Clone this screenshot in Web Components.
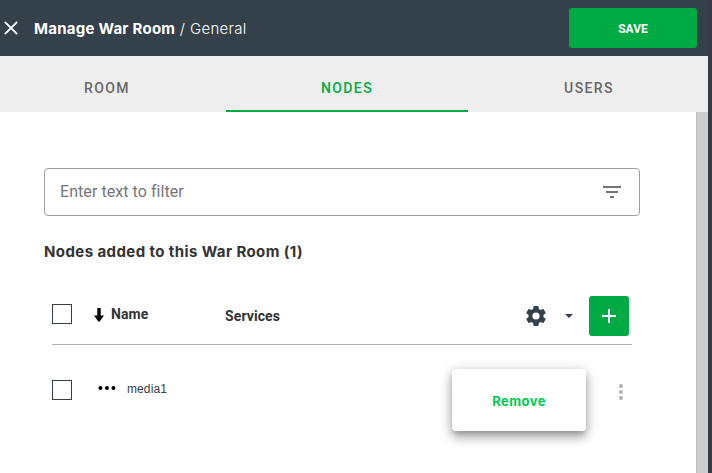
<!DOCTYPE html>
<html lang="en">
<head>
<meta charset="utf-8">
<title>Manage War Room</title>
<style>
  html, body { margin: 0; height: 100%; overflow: hidden; background: #383c4a; }
  body { font-family: Roboto, "Liberation Sans", sans-serif; }
</style>
</head>
<body>
<war-room-dialog></war-room-dialog>
<script>
const define = (name, html) => {
  const template = document.createElement('template');
  template.innerHTML = html;
  customElements.define(name, class extends HTMLElement {
    constructor() {
      super();
      this.attachShadow({ mode: 'open' }).append(template.content.cloneNode(true));
    }
  });
};

define('dialog-header', `
<style>
  :host { display: flex; align-items: center; box-sizing: border-box; height: 56px; padding: 0 11px 0 4px; background: #35414a; color: #fff; }
  svg { display: block; width: 14px; height: 14px; margin-right: 16px; }
  .title { flex: 1; font: 400 15px/24px Inter, sans-serif; white-space: pre; margin-top: 1px; }
  b { font-weight: 700; letter-spacing: .25px; }
  .sub { font-weight: 300; letter-spacing: .32px; }
</style>
<svg viewBox="0 0 14 14"><path d="M.8.8 13.2 13.2M13.2.8.8 13.2" stroke="#fff" stroke-width="1.9" fill="none"/></svg>
<div class="title"><b><slot name="title"></slot></b><span class="sub"> / <slot name="section"></slot></span></div>
<slot name="action"></slot>`);

define('primary-button', `
<style>
  :host { display: flex; align-items: center; justify-content: center; box-sizing: border-box; width: 128px; height: 40px; padding-top: 1px; border-radius: 3px; background: #00ab44; color: #fff; font: 700 12px/16px Roboto, sans-serif; }
</style><slot></slot>`);

define('tab-item', `
<style>
  :host { display: flex; justify-content: center; box-sizing: border-box; width: 242px; flex: none; height: 56px; padding-top: 20px; color: #686868; font: 500 14px/24px Roboto, sans-serif; letter-spacing: 1.4px; border-bottom: 2px solid transparent; }
  :host(:first-child) { width: 238px; }
  :host([selected]) { color: #00ab44; border-color: #00ab44; }
</style><slot></slot>`);

define('tab-bar', `
<style>
  :host { display: flex; margin-left: -12px; background: #eee; }
</style><slot></slot>`);

define('filter-input', `
<style>
  :host { display: flex; align-items: center; justify-content: space-between; box-sizing: border-box; height: 48px; padding: 0 18px 1px 15px; border: 1px solid #9e9e9e; border-radius: 4px; color: #757575; font: 400 16px/24px Roboto, sans-serif; letter-spacing: .06px; }
  svg { display: block; width: 18px; height: 12px; margin-top: 1px; }
</style>
<span><slot></slot></span>
<svg viewBox="0 0 18 12" fill="#757575"><path d="M0 0h18v2H0zM3 5h12v2H3zM7 10h4v2H7z"/></svg>`);

define('check-box', `
<style>:host { display: block; box-sizing: border-box; flex: none; width: 20px; height: 20px; border: 1px solid #35414a; }</style>`);

define('table-head', `
<style>
  :host { display: flex; box-sizing: border-box; height: 49px; border-bottom: 1px solid #aeb3b7; color: #333; font: 700 14px/20px Roboto, sans-serif; letter-spacing: .1px; }
  check-box { margin: 8px 22px 0 0; }
  .arrow { width: 10px; height: 14px; margin: 12px 7px 0 0; }
  .name { width: 114px; margin-top: 8px; }
  .services { flex: 1; margin-top: 10px; }
  .gear { width: 24px; height: 24px; margin: 8px 17px 0 0; }
  .caret { width: 8px; height: 4px; margin: 18px 16px 0 0; }
  .add { display: grid; place-items: center; width: 40px; height: 40px; margin-right: 3px; border-radius: 3px; background: #00ab44; }
  .add svg { width: 14px; height: 14px; }
</style>
<check-box></check-box>
<svg class="arrow" viewBox="0 0 10 14"><path d="M3.3 0h3.4v7.5H10L5.7 13.6H4.3L0 7.5h3.3z"/></svg>
<div class="name"><slot name="name"></slot></div>
<div class="services"><slot name="services"></slot></div>
<svg class="gear" viewBox="0 0 24 24" fill="#35414a"><path d="M19.43 12.98c.04-.32.07-.64.07-.98s-.03-.66-.07-.98l2.11-1.65c.19-.15.24-.42.12-.64l-2-3.46c-.12-.22-.39-.3-.61-.22l-2.49 1c-.52-.4-1.08-.73-1.69-.98l-.38-2.65A.49.49 0 0 0 14 2h-4c-.25 0-.46.18-.49.42l-.38 2.65c-.61.25-1.17.59-1.69.98l-2.49-1c-.23-.09-.49 0-.61.22l-2 3.46c-.13.22-.07.49.12.64l2.11 1.65c-.04.32-.07.65-.07.98s.03.66.07.98l-2.11 1.65c-.19.15-.24.42-.12.64l2 3.46c.12.22.39.3.61.22l2.49-1c.52.4 1.08.73 1.69.98l.38 2.65c.03.24.24.42.49.42h4c.25 0 .46-.18.49-.42l.38-2.65c.61-.25 1.17-.59 1.69-.98l2.49 1c.23.09.49 0 .61-.22l2-3.46c.12-.22.07-.49-.12-.64zM12 15.6a3.6 3.6 0 1 1 0-7.2 3.6 3.6 0 0 1 0 7.2z"/></svg>
<svg class="caret" viewBox="0 0 8 4" fill="#35414a"><path d="M0 0h8L4 4z"/></svg>
<div class="add"><svg viewBox="0 0 14 14" fill="#fff"><path d="M6 0h2v6h6v2H8v6H6V8H0V6h6z"/></svg></div>`);

define('node-row', `
<style>
  :host { display: flex; position: relative; padding-top: 35px; color: #35414a; }
  .dots { width: 18px; height: 4px; margin: 6px 11px 0 26px; }
  .name { flex: 1; font: 400 12px/16px "Liberation Sans", sans-serif; margin-top: 1px; letter-spacing: .1px; }
  .more { width: 4px; height: 16px; margin: 4px 9px 0 0; }
</style>
<check-box></check-box>
<svg class="dots" viewBox="0 0 18 4"><circle cx="2.4" cy="2" r="2"/><circle cx="8.9" cy="2" r="2"/><circle cx="15.4" cy="2" r="2"/></svg>
<div class="name"><slot></slot></div>
<svg class="more" viewBox="0 0 4 16" fill="#aeb3b7"><circle cx="2" cy="2" r="2"/><circle cx="2" cy="8" r="2"/><circle cx="2" cy="14" r="2"/></svg>
<slot name="menu"></slot>`);

define('row-menu', `
<style>
  :host { position: absolute; left: 400px; top: 24px; display: flex; align-items: center; justify-content: center; box-sizing: border-box; width: 134px; height: 62px; padding-top: 2px; border-radius: 4px; background: #fff; color: #00cb51; font: 700 13px/20px Inter, sans-serif; letter-spacing: .45px; box-shadow: 0 5px 5px -3px rgba(0,0,0,.2), 0 8px 10px 1px rgba(0,0,0,.14), 0 3px 14px 2px rgba(0,0,0,.12), 0 2px 8px rgba(0,0,0,.15); }
</style><slot></slot>`);

define('scroll-panel', `
<style>
  :host { display: flex; flex: 1; min-height: 0; background: #fff; }
  .content { flex: 1; padding: 56px 56px 0 44px; }
  .bar { width: 12px; box-sizing: border-box; background: #cdcdcd; border-left: 1px solid #c1c1b9; }
</style><div class="content"><slot></slot></div><div class="bar"></div>`);

define('war-room-dialog', `
<style>
  :host { display: flex; flex-direction: column; width: 708px; height: 473px; overflow: hidden; background: #fff; }
  h2 { margin: 24px 0 32px; font: 700 15px/24px Inter, sans-serif; letter-spacing: .41px; color: #333; white-space: nowrap; }
  .table { margin: 0 8px; }
</style>
<dialog-header>
  <span slot="title">Manage War Room</span><span slot="section">General</span>
  <primary-button slot="action">SAVE</primary-button>
</dialog-header>
<tab-bar><tab-item>ROOM</tab-item><tab-item selected>NODES</tab-item><tab-item>USERS</tab-item></tab-bar>
<scroll-panel>
  <filter-input>Enter text to filter</filter-input>
  <h2>Nodes added to this War Room (1)</h2>
  <div class="table">
    <table-head><span slot="name">Name</span><span slot="services">Services</span></table-head>
    <node-row>media1<row-menu slot="menu">Remove</row-menu></node-row>
  </div>
</scroll-panel>`);
</script>
</body>
</html>
